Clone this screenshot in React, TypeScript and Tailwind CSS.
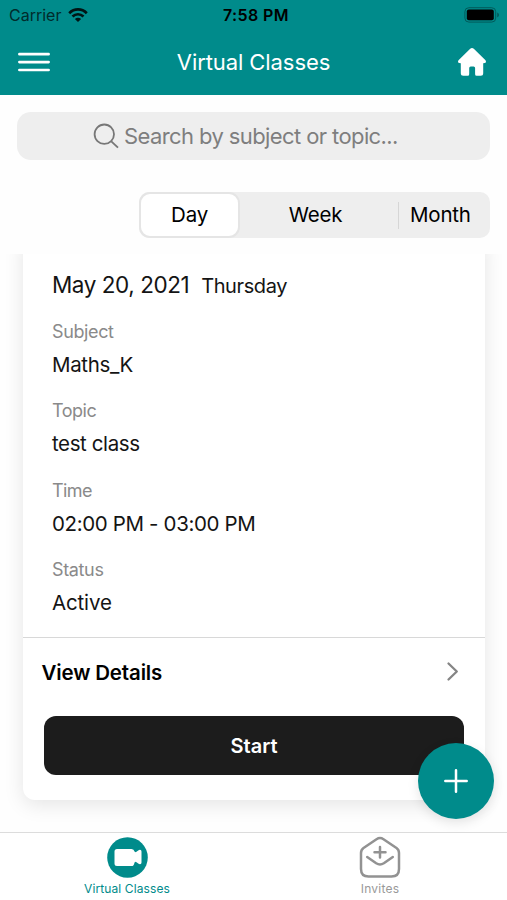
import React from "react";

const fields = [
  { label: "Subject", value: "Maths_K", ls: "tracking-[-0.38px]", vs: "tracking-[-0.35px]" },
  { label: "Topic", value: "test class", ls: "tracking-[-0.5px]", vs: "tracking-[-0.4px]" },
  { label: "Time", value: "02:00 PM - 03:00 PM", ls: "tracking-[-0.6px]", vs: "tracking-[-0.36px]" },
  { label: "Status", value: "Active", ls: "tracking-[-0.35px]", vs: "tracking-[-0.15px]" },
];

function StatusBar() {
  return (
    <div className="flex h-[30px] items-center justify-between pr-[7px] pl-[9px] text-black">
      <div className="flex w-[100px] items-center gap-[7px]">
        <span className="text-[16px] leading-none tracking-[0px] text-[#002c2c]">Carrier</span>
        <svg width="20" height="14" viewBox="0 0 20 14" fill="none" stroke="#001414" strokeWidth="2.7">
          <path d="M1.2 5.2C6.2 0.2 13.8 0.2 18.8 5.2" />
          <path d="M4.5 8.500c3.2-3 7.800-3 11 0" />
          <path d="M6.900 10.900 10 14l3.100-3.100c-1.800-1.500-4.400-1.500-6.200 0Z" fill="#001414" stroke="none" />
        </svg>
      </div>
      <span className="pl-[3px] text-[16px] leading-none font-semibold tracking-[0.4px] whitespace-nowrap">7:58 PM</span>
      <div className="flex w-[100px] justify-end">
        <svg width="36" height="16" viewBox="0 0 36 16">
          <rect x="0.9" y="0.7" width="30.8" height="14.4" rx="4" fill="none" stroke="#005b5b" />
          <rect x="2.8" y="2.6" width="27" height="10.6" rx="2" fill="#000" />
          <path d="M33.2 5.5c2.4.8 2.4 4 0 4.8Z" fill="#005b5b" />
        </svg>
      </div>
    </div>
  );
}

function Header() {
  return (
    <header className="h-[95px] shrink-0 bg-[#008b8b]">
      <StatusBar />
      <div className="flex h-[63px] items-center justify-between pr-[20px] pl-[18px]">
        <svg width="32" height="20" viewBox="0 0 32 20" stroke="#fff" strokeWidth="2.7" strokeLinecap="round">
          <path d="M1.4 2.2h29.2M1.4 10.1h29.2M1.4 18h29.2" />
        </svg>
        <h1 className="text-[22px] leading-none tracking-[-0.08px] whitespace-nowrap text-white">Virtual Classes</h1>
        <svg width="30" height="30" viewBox="0 0 30 30" fill="#fff">
          <path d="M13.200 1.700q1.800-1.600 3.600 0L28.500 13.200q1.300 2-.8 2.900L26.200 16.200V26.300q0 2.500-2.500 2.500H19.600q-1.500 0-1.500-1.500V21q0-1.600-1.500-1.600H13.700q-1.500 0-1.500 1.600v6.300q0 1.500-1.500 1.500H6.300q-2.500 0-2.500-2.500V16.200L2.300 16.100q-2.100-.9-.8-2.900Z" />
        </svg>
      </div>
    </header>
  );
}

function Field({ label, value, ls, vs }: { label: string; value: string; ls: string; vs: string }) {
  return (
    <div className="h-[79.5px] whitespace-nowrap">
      <div className={`h-[31px] text-[18px] leading-[31px] text-[#8a8a8a] ${ls}`}>{label}</div>
      <div className={`h-[37px] text-[20.500px] leading-[36px] ${vs}`}>{value}</div>
    </div>
  );
}

export default function App() {
  return (
    <div className="relative flex h-[900px] w-[507px] flex-col overflow-hidden bg-[#fefefe] font-['Inter','Liberation_Sans',sans-serif] text-[#141414]">
      <Header />

      <div className="h-[159px] shrink-0 px-[17px] pt-[17px]">
        <div className="flex h-[48px] items-center rounded-[14px] bg-[#eeeeee] pl-[76px] text-[#7e7e7e]">
          <svg width="27" height="27" viewBox="0 0 27 27" fill="none" stroke="#777" strokeWidth="1.800">
            <circle cx="11.300" cy="11.200" r="9.700" />
            <path d="m18.300 18.300 6.700 6.400" />
          </svg>
          <span className="ml-[4px] text-[22px] leading-none tracking-[-0.6px] whitespace-nowrap">
            Search by subject or topic...
          </span>
        </div>
        <div className="mt-[32px] ml-[122px] flex h-[46px] items-center rounded-[10px] bg-[#eeeeee] text-[20.500px] text-black">
          <div className="flex h-full w-[101px] items-center justify-center rounded-[11px] border-[2.500px] border-[#e5e5e5] bg-white tracking-[-0.2px]">
            Day
          </div>
          <div className="flex w-[158px] items-center justify-center pr-[7px] tracking-[-0.2px]">Week</div>
          <div className="h-[27px] w-px bg-[#d6d6d6]" />
          <div className="pl-[11px] tracking-[-0.200px]">Month</div>
        </div>
      </div>

      <main className="h-[578px] shrink-0 overflow-hidden bg-[#fefefe] px-[22.500px]">
        <section className="-mt-[20px] h-[566px] rounded-[12px] bg-white pt-[20px] shadow-[0_5px_20px_rgba(0,0,0,0.1)]">
          <div className="flex h-[61.500px] items-baseline gap-[12px] pl-[29.500px] leading-[62px] whitespace-nowrap">
            <span className="text-[22.500px] tracking-[-0.45px]">May 20, 2021</span>
            <span className="text-[20px] tracking-[-0.4px]">Thursday</span>
          </div>
          <div className="h-[321px] pl-[29.500px]">
            {fields.map((f) => (
              <Field key={f.label} {...f} />
            ))}
          </div>
          <div className="flex h-[79.500px] items-center justify-between border-t-[1.500px] border-[#d8d8d8] pr-[25px] pb-[7px] pl-[19px]">
            <span className="text-[20.500px] font-semibold tracking-[-0.15px] text-black">View Details</span>
            <svg className="mb-[4px]" width="14" height="21" viewBox="0 0 14 21" fill="none" stroke="#858585" strokeWidth="2.300" strokeLinecap="round" strokeLinejoin="round">
              <path d="m2.500 2.500 8.300 8-8.300 8" />
            </svg>
          </div>
          <button className="ml-[21.500px] flex h-[59px] w-[420px] items-center justify-center rounded-[12px] bg-[#1c1c1c] text-[20px] font-semibold text-white">
            Start
          </button>
        </section>
      </main>

      <nav className="flex h-[68px] shrink-0 border-t border-[#dcdcdc] bg-white">
        <div className="flex w-[254px] flex-col items-center pt-[4px] text-[#008b8b]">
          <svg width="41" height="41" viewBox="0 0 41 41">
            <circle cx="20.500" cy="20.500" r="20.300" fill="#008b8b" />
            <path d="M10 12H24.500q2.500 0 3 2.600l1.200.7 3.300-2.300q2.500-.6 2.500 1.400v11.200q0 2-2.500 1.400l-3.300-2.300-1.200.7q-.5 3.600-3 3.600H10q-2.500 0-2.500-2.500v-12Q7.500 12 10 12Z" fill="#fff" />
          </svg>
          <span className="mt-[4px] text-[12px] leading-[14px] tracking-[0.1px]">Virtual Classes</span>
        </div>
        <div className="flex w-[252px] flex-col items-center pt-[3px] text-[#999]">
          <svg width="42" height="42" viewBox="0 0 42 42" fill="none" stroke="#929292" strokeWidth="2.500" strokeLinecap="round" strokeLinejoin="round">
            <path d="M17.500 3.200q3.500-2.200 7 0L37.500 12q2.500 1.800 2.500 5V33q0 7.500-7.500 7.500h-23Q2 40.500 2 33V17q0-3.200 2.500-5Z" />
            <path d="m8.200 21 9 6.300q3.800 2.400 7.600 0l9-6.300M21 11v10.500M15.500 16.200h11" />
          </svg>
          <span className="mt-[4px] text-[12px] leading-[14px] tracking-[0.25px]">Invites</span>
        </div>
      </nav>

      <button aria-label="Add class" className="absolute top-[743px] left-[418px] flex size-[75.500px] items-center justify-center rounded-full bg-[#008b8b] shadow-[0_4px_12px_rgba(0,0,0,0.1)]">
        <svg width="26" height="26" viewBox="0 0 26 26" stroke="#fff" strokeWidth="2.500" strokeLinecap="round">
          <path d="M13 2.300v21.400M2.300 13h21.400" />
        </svg>
      </button>
    </div>
  );
}
